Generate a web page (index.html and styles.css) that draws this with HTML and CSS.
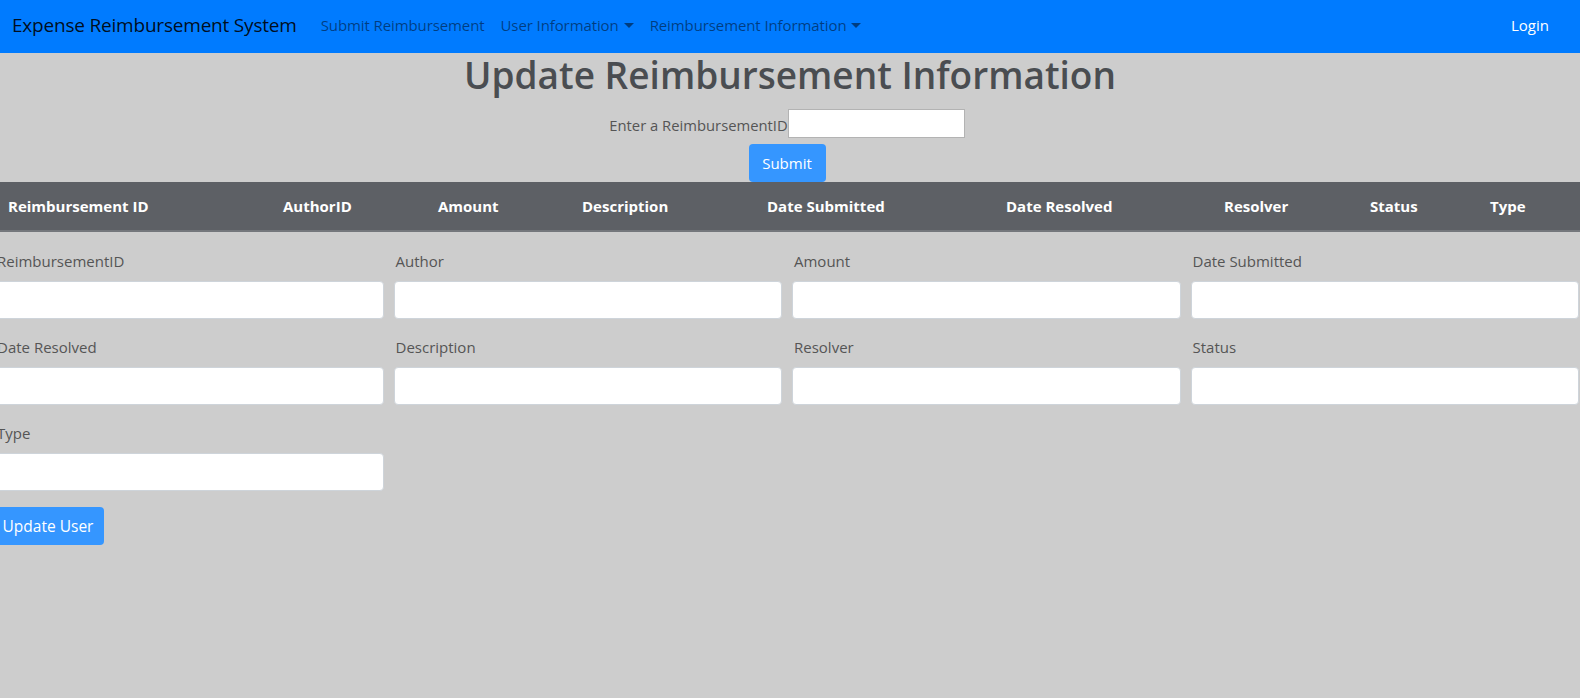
FILE: index.html
```html
<!DOCTYPE html>
<html>
<head>
<meta charset="utf-8">
<title>Expense Reimbursement System</title>
<link rel="stylesheet" href="styles.css">
</head>
<body>
<nav class="navbar">
  <a class="brand" href="#">Expense Reimbursement System</a>
  <ul class="nav-links">
    <li><a href="#">Submit Reimbursement</a></li>
    <li><a href="#" class="dropdown">User Information</a></li>
    <li><a href="#" class="dropdown">Reimbursement Information</a></li>
  </ul>
  <a class="login" href="#">Login</a>
</nav>

<main>
  <h1 class="title">Update Reimbursement Information</h1>
  <form class="search">
    <div class="search-row">
      <label class="search-label" for="rid">Enter a ReimbursementID</label><input class="search-input" id="rid" type="text">
    </div>
    <button class="btn btn-submit" type="button">Submit</button>
  </form>

  <table class="data-table">
    <colgroup>
      <col class="c1"><col class="c2"><col class="c3"><col class="c4"><col class="c5"><col class="c6"><col class="c7"><col class="c8"><col class="c9">
    </colgroup>
    <thead>
      <tr>
        <th>Reimbursement ID</th>
        <th>AuthorID</th>
        <th>Amount</th>
        <th>Description</th>
        <th>Date Submitted</th>
        <th>Date Resolved</th>
        <th>Resolver</th>
        <th>Status</th>
        <th>Type</th>
      </tr>
    </thead>
  </table>

  <form class="edit-form">
    <div class="field-grid">
      <div class="field"><label>ReimbursementID</label><input type="text"></div>
      <div class="field"><label>Author</label><input type="text"></div>
      <div class="field"><label>Amount</label><input type="text"></div>
      <div class="field"><label>Date Submitted</label><input type="text"></div>
      <div class="field"><label>Date Resolved</label><input type="text"></div>
      <div class="field"><label>Description</label><input type="text"></div>
      <div class="field"><label>Resolver</label><input type="text"></div>
      <div class="field"><label>Status</label><input type="text"></div>
      <div class="field"><label>Type</label><input type="text"></div>
    </div>
    <button class="btn btn-update" type="button">Update User</button>
  </form>
</main>
</body>
</html>
```

FILE: styles.css
```css
* { box-sizing: border-box; }

html, body {
  margin: 0;
  padding: 0;
  width: 1580px;
  height: 698px;
  overflow: hidden;
}

body {
  background: #cdcdcd;
  font-family: "Open Sans", "Noto Sans", sans-serif;
  font-size: 16px;
  line-height: 24px;
  color: #212529;
}

a { text-decoration: none; }

.navbar {
  height: 53px;
  background: #007bff;
  display: flex;
  align-items: center;
  padding: 0 31px 4px 12px;
}

.brand {
  font-size: 19px;
  color: rgba(0, 0, 0, 0.9);
  margin-right: 24px;
  letter-spacing: -0.2px;
}

.nav-links {
  list-style: none;
  display: flex;
  margin: 0;
  padding: 0;
  gap: 16px;
  flex: 1;
}

.nav-links a {
  color: rgba(0, 0, 0, 0.5);
  font-size: 15px;
  letter-spacing: -0.1px;
}

.dropdown::after {
  content: "";
  display: inline-block;
  margin-left: 5px;
  vertical-align: 3px;
  border-top: 5px solid;
  border-left: 5px solid transparent;
  border-right: 5px solid transparent;
}

.login {
  color: #fff;
  font-size: 15px;
}

.title {
  margin: 0;
  text-align: center;
  font-size: 37px;
  line-height: 44px;
  font-weight: 600;
  color: #4a4d51;
}

.search {
  display: flex;
  flex-direction: column;
  align-items: center;
  margin-top: 12px;
}

.search-row {
  display: flex;
  align-items: center;
  height: 29px;
  margin-right: 6px;
}

.search-label {
  color: #555;
  font-size: 14.8px;
  padding-top: 3px;
}

.search-input {
  width: 177px;
  height: 29px;
  border: 1px solid #b3b3b3;
  background: #fff;
  margin: 0;
}

.btn {
  border: none;
  border-radius: 4px;
  background: #3596ff;
  color: #fff;
  font-family: inherit;
  font-size: 15px;
  height: 38px;
  padding: 0;
  white-space: nowrap;
  text-align: center;
}

.btn-submit {
  margin-top: 6px;
  width: 77px;
  margin-right: 6px;
}

.data-table {
  width: 1580px;
  table-layout: fixed;
  border-collapse: collapse;
  margin-bottom: 17px;
}

.c1 { width: 275px; }
.c2 { width: 155px; }
.c3 { width: 144px; }
.c4 { width: 185px; }
.c5 { width: 239px; }
.c6 { width: 218px; }
.c7 { width: 146px; }
.c8 { width: 120px; }
.c9 { width: 98px; }

.data-table th {
  background: #5d6065;
  color: #fff;
  font-weight: 700;
  font-size: 15px;
  text-align: left;
  padding: 12px 0 12px 8px;
  line-height: 24px;
  border-bottom: 2px solid #74777c;
  white-space: nowrap;
}

.edit-form {
  margin-left: -5px;
  width: 1584px;
}

.field-grid {
  display: grid;
  grid-template-columns: repeat(4, 1fr);
  column-gap: 10px;
}

.field {
  margin-bottom: 16px;
}

.field label {
  display: block;
  color: #555;
  font-size: 15px;
  line-height: 24px;
  margin-bottom: 8px;
  padding-left: 2px;
}

.field input {
  display: block;
  width: 100%;
  height: 38px;
  border: 1px solid #ced4da;
  border-radius: 4px;
  background: #fff;
  margin: 0;
}

.btn-update {
  margin-left: -3px;
  width: 112px;
  font-size: 15.5px;
}
```
